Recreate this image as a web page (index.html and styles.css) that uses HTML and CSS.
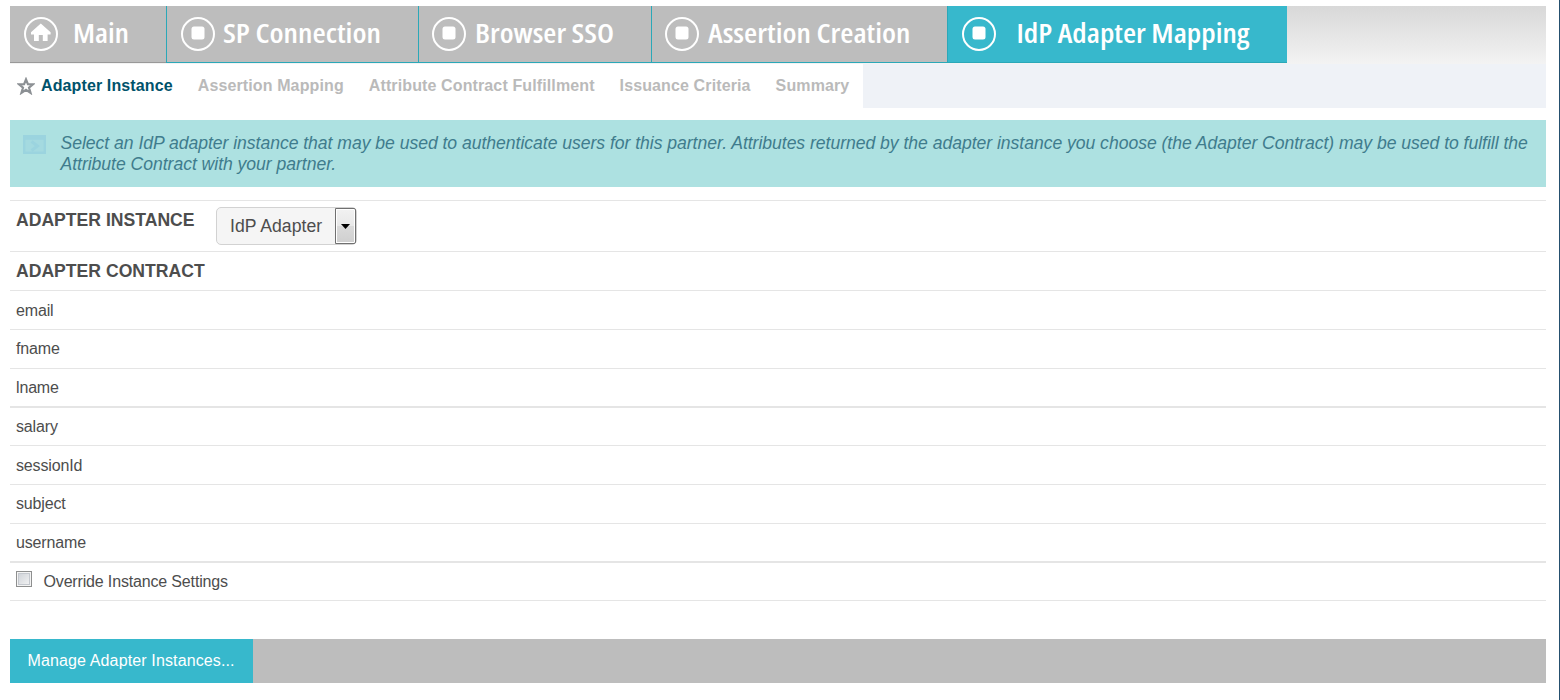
FILE: index.html
```html
<!DOCTYPE html>
<html lang="en">
<head>
<meta charset="utf-8">
<title>IdP Adapter Mapping</title>
<link rel="stylesheet" href="styles.css">
</head>
<body>
<div class="page">
  <nav class="tabs">
    <a class="tab tab-main">
      <svg class="tab-art" width="156" height="56"><circle class="ring" cx="31" cy="28" r="16"/><path class="solid" d="M30.800 17.500 21 26.300v2.200h3V35h4.800v-6h4v6h4.800v-6.500h3v-2.200z"/><text x="63" y="37" textLength="56" lengthAdjust="spacingAndGlyphs">Main</text></svg>
    </a>
    <a class="tab tab-sp">
      <svg class="tab-art" width="251" height="56"><circle class="ring" cx="31" cy="28" r="16"/><rect class="solid" x="24.500" y="20.500" width="13" height="13" rx="2.500"/><text x="56" y="37" textLength="158" lengthAdjust="spacingAndGlyphs">SP Connection</text></svg>
    </a>
    <a class="tab tab-browser">
      <svg class="tab-art" width="232" height="56"><circle class="ring" cx="30" cy="28" r="16"/><rect class="solid" x="23.500" y="20.500" width="13" height="13" rx="2.500"/><text x="56" y="37" textLength="139" lengthAdjust="spacingAndGlyphs">Browser SSO</text></svg>
    </a>
    <a class="tab tab-assertion">
      <svg class="tab-art" width="295" height="56"><circle class="ring" cx="30" cy="28" r="16"/><rect class="solid" x="23.500" y="20.500" width="13" height="13" rx="2.500"/><text x="56" y="37" textLength="202.500" lengthAdjust="spacingAndGlyphs">Assertion Creation</text></svg>
    </a>
    <a class="tab tab-current">
      <svg class="tab-art" width="339" height="56"><circle class="ring" cx="31" cy="28" r="16"/><rect class="solid" x="24.500" y="20.500" width="13" height="13" rx="2.500"/><text x="68.500" y="37" textLength="233" lengthAdjust="spacingAndGlyphs">IdP Adapter Mapping</text></svg>
    </a>
  </nav>
  <nav class="steps">
    <div class="step-list">
      <svg class="star" width="18" height="18" viewBox="0 0 18 18"><path d="M9 2.400 10.900 7.100 16 7.300 12 10.600 13.500 15.800 9 12.800 4.500 15.800 6 10.600 2 7.300 7.100 7.100Z"/></svg>
      <a class="step active">Adapter Instance</a>
      <a class="step">Assertion Mapping</a>
      <a class="step">Attribute Contract Fulfillment</a>
      <a class="step">Issuance Criteria</a>
      <a class="step">Summary</a>
    </div>
  </nav>
  <section class="info">
    <svg class="info-icon" width="23" height="19" viewBox="0 0 23 19"><path class="frame" d="M1.200 1.200h20.600v16.600H1.200zM1.200 3.500h20.600"/><path class="arrow" d="m8.500 6.500 6 4.500-6 4.500"/></svg>
    <p class="info-text">Select an IdP adapter instance that may be used to authenticate users for this partner. Attributes returned by the adapter instance you choose (the Adapter Contract) may be used to fulfill the<br>Attribute Contract with your partner.</p>
  </section>
  <section class="rows">
    <div class="row row-instance">
      <span class="heading">ADAPTER INSTANCE</span>
      <div class="select"><span class="value">IdP Adapter</span><span class="drop"><svg width="9" height="5"><path d="M0 0h9L4.500 5z"/></svg></span></div>
    </div>
    <div class="row row-contract"><span class="heading">ADAPTER CONTRACT</span></div>
    <div class="row row-email">email</div>
    <div class="row">fname</div>
    <div class="row thick">lname</div>
    <div class="row short">salary</div>
    <div class="row row-session">sessionId</div>
    <div class="row">subject</div>
    <div class="row thick">username</div>
    <div class="row short"><span class="checkbox"></span><span class="check-label">Override Instance Settings</span></div>
  </section>
  <footer class="actions"><a class="manage">Manage Adapter Instances...</a></footer>
</div>
</body>
</html>
```
FILE: styles.css
```css
* { box-sizing: border-box; }
body {
  margin: 0;
  background: #fff;
  color: #4d4d4d;
  font-family: "Liberation Sans", Arial, sans-serif;
  font-size: 16px;
}
.page {
  height: 700px;
  padding: 6px 13px 0 10px;
  border-right: 1px solid #254f6e;
  overflow: hidden;
}
.tabs {
  display: flex;
  height: 58px;
  background: linear-gradient(#d8d8d8, #f3f3f3);
}
.tab {
  height: 57px;
  background: #bdbdbd;
  border-left: 1px solid #2ba8b8;
  border-bottom: 1px solid #2ba8b8;
}
.tab-main { width: 156px; border-left: 0; border-bottom-color: #999; }
.tab-sp { width: 252px; }
.tab-browser { width: 233px; }
.tab-assertion { width: 296px; }
.tab-current { width: 340px; background: #37b8cc; }
.tab-art { display: block; }
.tab-art text {
  fill: #fff;
  font-family: "Open Sans", "Noto Sans", sans-serif;
  font-size: 27px;
  font-weight: 600;
  font-stretch: 75%;
}
.ring { fill: none; stroke: #fff; stroke-width: 2; }
.solid { fill: #fff; }
.steps { height: 44px; background: #eff2f7; }
.step-list {
  display: flex;
  width: 853px;
  height: 44px;
  padding: 12px 0 0 7px;
  background: #fff;
}
.star { flex: none; margin: 1px 6px 0 0; fill: none; stroke: #8c9094; stroke-width: 2.2; }
.step {
  margin-right: 25px;
  color: #bababa;
  font-weight: bold;
  letter-spacing: 0.12px;
  line-height: 19px;
  white-space: nowrap;
}
.step.active { color: #00526b; }
.info {
  display: flex;
  height: 67px;
  margin-top: 12px;
  padding: 13px 0 0 13px;
  background: #ade1e1;
}
.info-icon { flex: none; margin: 2px 14.5px 0 0; fill: #a4dae0; stroke: #9bd4df; }
.frame { stroke-width: 2.4; }
.arrow { fill: none; stroke-width: 3; }
.info-text {
  margin: 0;
  color: #3f7c8d;
  font-size: 17.6px;
  font-style: italic;
  letter-spacing: -0.036px;
  line-height: 21px;
  white-space: nowrap;
}
.rows { margin-top: 13px; border-top: 1px solid #e5e5e5; }
.row {
  display: flex;
  height: 39px;
  padding: 9px 0 0 6px;
  border-bottom: 1px solid #e5e5e5;
  letter-spacing: -0.16px;
  line-height: 19px;
}
.row-email, .row-session { padding-top: 10px; }
.thick { border-bottom-width: 2px; }
.short { height: 38px; }
.row-instance { height: 51px; padding-top: 6px; }
.heading {
  width: 200px;
  font-size: 17.6px;
  font-weight: bold;
  letter-spacing: 0;
  line-height: 25px;
  white-space: nowrap;
}
.row-instance .heading { line-height: 26px; }
.row-contract { padding-top: 7px; }
.select {
  display: flex;
  width: 141px;
  height: 38px;
  border: 1px solid #d2d2d2;
  border-radius: 5px;
  background: #f5f5f5;
  font-size: 17.6px;
  letter-spacing: 0.05px;
  line-height: 36px;
}
.value { width: 118px; padding-left: 13px; white-space: nowrap; }
.drop {
  display: flex;
  align-items: center;
  justify-content: center;
  width: 21px;
  height: 36px;
  border: 1px solid #707070;
  border-radius: 0 2px 2px 0;
  background: linear-gradient(#f2f2f2, #e8e8e8 50%, #dadada 50%, #cfcfcf);
  box-shadow: inset 0 0 0 1px #fff;
}
.checkbox {
  width: 16px;
  height: 16px;
  margin: -1px 11.5px 0 0;
  border: 1px solid #8e8f8f;
  background: linear-gradient(135deg, #cbcfd5, #f6f6f6);
  box-shadow: inset 0 0 0 1px #f4f4f4, inset 0 0 0 2px #c4c8ce;
}
.actions { display: flex; height: 44px; margin-top: 38px; background: #bdbdbd; }
.manage {
  width: 243px;
  padding-left: 17.5px;
  background: #37b8cc;
  color: #fff;
  letter-spacing: 0.13px;
  line-height: 43px;
  white-space: nowrap;
}
```
